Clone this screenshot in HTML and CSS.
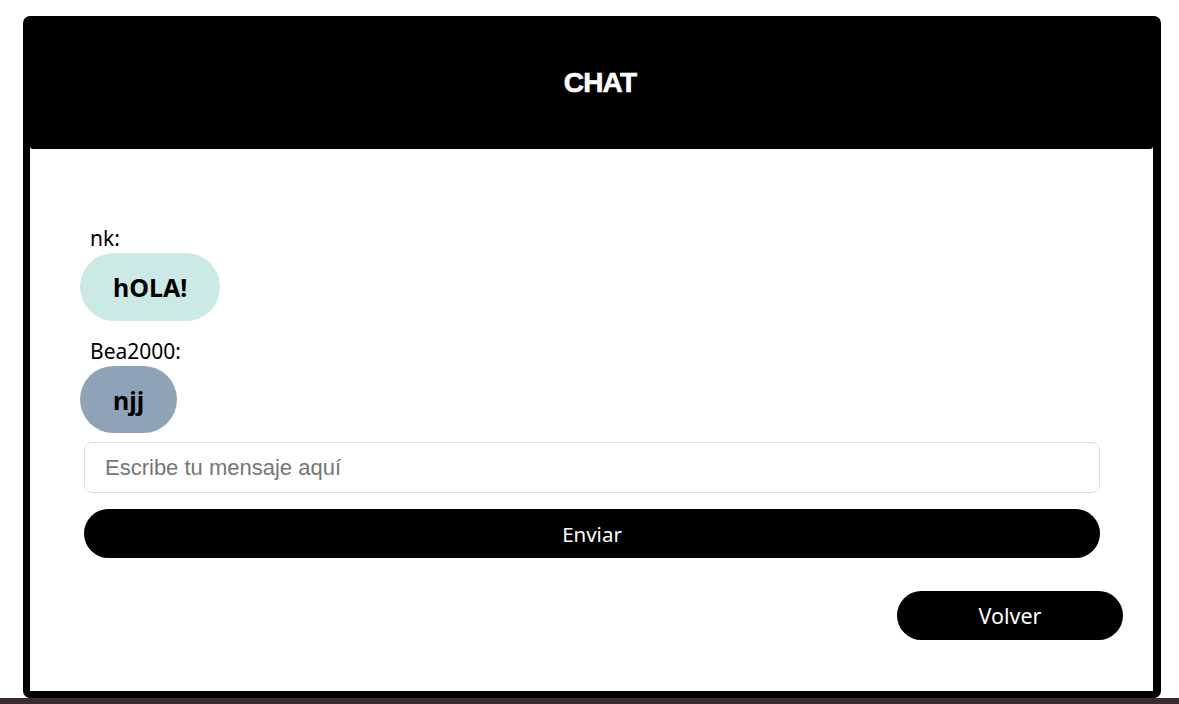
FILE: index.html
```html
<!DOCTYPE html>
<html lang="es">
<head>
<meta charset="utf-8">
<title>Chat</title>
<link rel="stylesheet" href="styles.css">
</head>
<body>
<div class="page">
  <div class="card">
    <header class="card-header">
      <h1 class="title">CHAT</h1>
    </header>
    <main class="card-body">
      <div class="messages">
        <div class="message">
          <div class="author">nk:</div>
          <div class="bubble bubble-mine">hOLA!</div>
        </div>
        <div class="message">
          <div class="author">Bea2000:</div>
          <div class="bubble bubble-other">njj</div>
        </div>
      </div>
      <form class="composer">
        <input class="composer-input" type="text" placeholder="Escribe tu mensaje aquí">
        <button class="btn btn-send" type="button">Enviar</button>
      </form>
      <div class="actions">
        <button class="btn btn-back" type="button">Volver</button>
      </div>
    </main>
  </div>
</div>
<div class="footer-strip"></div>
</body>
</html>
```

FILE: styles.css
```css
* { box-sizing: border-box; }

html, body {
  margin: 0;
  padding: 0;
  background: #ffffff;
  height: 100%;
}

body {
  display: flex;
  flex-direction: column;
  font-family: "Noto Sans", "Open Sans", sans-serif;
  overflow: hidden;
}

.page {
  padding: 16px 18px 0 23px;
}

.card {
  width: 1138px;
  height: 682px;
  border: 7px solid #000;
  border-right-width: 8px;
  border-radius: 7px;
  background: #fff;
  display: flex;
  flex-direction: column;
  overflow: hidden;
}

.card-header {
  height: 126px;
  background: #000;
  display: flex;
  align-items: center;
  justify-content: center;
  padding: 0 0 6px 17px;
  border-bottom-left-radius: 3px;
  border-bottom-right-radius: 3px;
}

.title {
  margin: 0;
  color: #fff;
  font-family: "Liberation Sans", Arial, sans-serif;
  font-weight: 700;
  font-size: 28px;
  letter-spacing: -0.8px;
  -webkit-text-stroke: 0.6px #fff;
}

.card-body {
  flex: 1;
  display: flex;
  flex-direction: column;
  padding: 76px 30px 0 50px;
}

.messages {
  display: flex;
  flex-direction: column;
  gap: 17px;
}

.message {
  display: flex;
  flex-direction: column;
  align-items: flex-start;
  gap: 2px;
}

.author {
  padding-left: 10px;
  font-size: 21px;
  line-height: 26px;
  color: #000;
}

.bubble {
  height: 68px;
  padding: 0 33px;
  border-radius: 34px;
  display: flex;
  align-items: center;
  font-weight: 700;
  font-size: 25px;
  color: #000;
}

.bubble-mine { background: #cceae5; }
.bubble-other { background: #8fa3b8; height: 67px; }

.composer {
  margin: 9px 23px 0 4px;
  display: flex;
  flex-direction: column;
  gap: 16px;
}

.composer-input {
  height: 51px;
  width: 100%;
  border: 1px solid #dedede;
  border-radius: 8px;
  padding: 0 20px;
  font-family: "Liberation Sans", Arial, sans-serif;
  font-size: 22px;
  color: #333;
  outline: none;
}

.composer-input::placeholder { color: #767676; }

.btn {
  height: 49px;
  border: none;
  border-radius: 25px;
  background: #000;
  color: #fff;
  font-family: "Noto Sans", "Open Sans", sans-serif;
  font-size: 20.5px;
  cursor: pointer;
}

.btn-send { width: 100%; }

.actions {
  margin-top: 33px;
  display: flex;
  justify-content: flex-end;
}

.btn-back { width: 226px; font-size: 21.5px; }

.footer-strip {
  flex: 1;
  background: #3c2b37;
}
```
